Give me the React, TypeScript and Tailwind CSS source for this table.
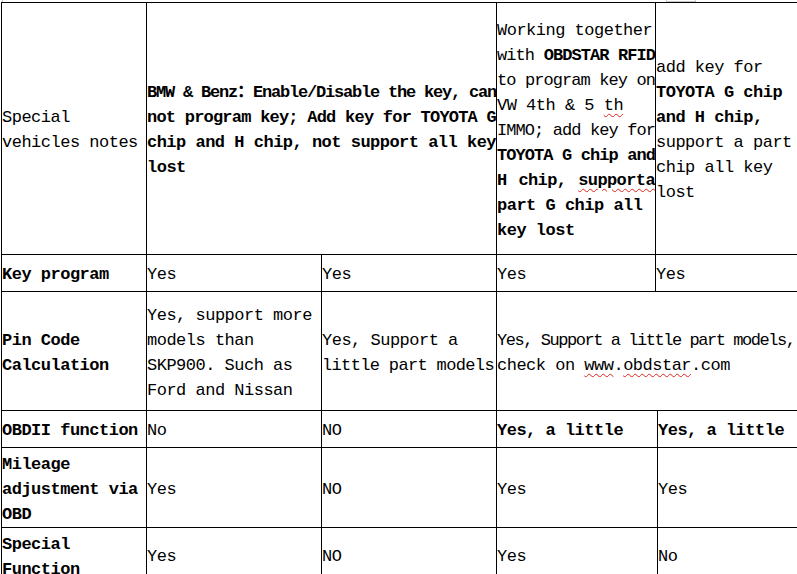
import React from "react";

const font = "font-['Liberation_Mono','Noto_Sans_CJK_SC',monospace]";

function Cell({ w, children }: { w: string; children?: React.ReactNode }) {
  return (
    <div className={`${w} shrink-0 h-full pt-[3px] border-r border-b border-black flex flex-col justify-center`}>
      {children}
    </div>
  );
}

function L({ children, b, j, t }: { children: React.ReactNode; b?: boolean; j?: boolean; t?: string }) {
  return (
    <div
      className={`whitespace-nowrap leading-[25px] ${b ? "font-bold" : ""} ${j ? "[text-align-last:justify]" : ""} ${t ?? "tracking-[-0.5px]"}`}
    >
      {children}
    </div>
  );
}

function Wavy({ children }: { children: React.ReactNode }) {
  return (
    <span className="underline decoration-wavy decoration-[#e0241b] decoration-1 underline-offset-[3px]">
      {children}
    </span>
  );
}

export default function App() {
  return (
    <div className={`w-[797px] h-[574px] overflow-hidden bg-white text-[17px] text-black ${font}`}>
      {/* bits of the page above the table */}
      <div className="h-[2px] flex">
        <div className="w-[3px] h-[2px] border-r border-[#c8c8c8]" />
        <div className="ml-[663px] w-[30px] h-[2px] border border-t-0 border-[#c8c8c8]" />
      </div>

      <div className="ml-[1px] w-max border-t border-l border-black">
        {/* Special vehicles notes */}
        <div className="flex h-[252px]">
          <Cell w="w-[145px]">
            <L>Special</L>
            <L>vehicles notes</L>
          </Cell>
          <Cell w="w-[350px]">
            <L b j t="tracking-[-1.2px]">BMW &amp; Benz：Enable/Disable the key, can</L>
            <L b j t="tracking-[-0.8px]">not program key; Add key for TOYOTA G</L>
            <L b j t="tracking-[-0.55px]">chip and H chip, not support all key</L>
            <L b>lost</L>
          </Cell>
          <Cell w="w-[159px]">
            <L>Working together</L>
            <L j t="tracking-[-0.95px]">
              with <b>OBDSTAR RFID</b>
            </L>
            <L j t="tracking-[-0.95px]">to program key on</L>
            <L>
              VW 4th &amp; 5 <Wavy>th</Wavy>
            </L>
            <L j t="tracking-[-0.95px]">IMMO; add key for</L>
            <L b j t="tracking-[-0.95px]">TOYOTA G chip and</L>
            <L b j t="tracking-[-0.6px]">
              H chip, <Wavy>supporta</Wavy>
            </L>
            <L b>part G chip all</L>
            <L b>key lost</L>
          </Cell>
          <Cell w="w-[170px]">
            <L>add key for</L>
            <L b>TOYOTA G chip</L>
            <L b>and H chip,</L>
            <L>support a part G</L>
            <L>chip all key</L>
            <L>lost</L>
          </Cell>
        </div>

        {/* Key program */}
        <div className="flex h-[37px]">
          <Cell w="w-[145px]">
            <L b>Key program</L>
          </Cell>
          <Cell w="w-[175px]">
            <L>Yes</L>
          </Cell>
          <Cell w="w-[175px]">
            <L>Yes</L>
          </Cell>
          <Cell w="w-[159px]">
            <L>Yes</L>
          </Cell>
          <Cell w="w-[170px]">
            <L>Yes</L>
          </Cell>
        </div>

        {/* Pin Code Calculation */}
        <div className="flex h-[119px]">
          <Cell w="w-[145px]">
            <L b>Pin Code</L>
            <L b>Calculation</L>
          </Cell>
          <Cell w="w-[175px]">
            <L>Yes, support more</L>
            <L>models than</L>
            <L>SKP900. Such as</L>
            <L>Ford and Nissan</L>
          </Cell>
          <Cell w="w-[175px]">
            <L>Yes, Support a</L>
            <L t="tracking-[-0.65px]">little part models</L>
          </Cell>
          <Cell w="w-[329px]">
            <L t="tracking-[-1.45px]">Yes, Support a little part models,</L>
            <L>
              check on <Wavy>www</Wavy>.<Wavy>obdstar</Wavy>.com
            </L>
          </Cell>
        </div>

        {/* OBDII function */}
        <div className="flex h-[37px]">
          <Cell w="w-[145px]">
            <L b>OBDII function</L>
          </Cell>
          <Cell w="w-[175px]">
            <L>No</L>
          </Cell>
          <Cell w="w-[175px]">
            <L>NO</L>
          </Cell>
          <Cell w="w-[161px]">
            <L b>Yes, a little</L>
          </Cell>
          <Cell w="w-[168px]">
            <L b>Yes, a little</L>
          </Cell>
        </div>

        {/* Mileage adjustment via OBD */}
        <div className="flex h-[80px]">
          <Cell w="w-[145px]">
            <L b>Mileage</L>
            <L b>adjustment via</L>
            <L b>OBD</L>
          </Cell>
          <Cell w="w-[175px]">
            <L>Yes</L>
          </Cell>
          <Cell w="w-[175px]">
            <L>NO</L>
          </Cell>
          <Cell w="w-[161px]">
            <L>Yes</L>
          </Cell>
          <Cell w="w-[168px]">
            <L>Yes</L>
          </Cell>
        </div>

        {/* Special Function */}
        <div className="flex h-[55px]">
          <Cell w="w-[145px]">
            <L b>Special</L>
            <L b>Function</L>
          </Cell>
          <Cell w="w-[175px]">
            <L>Yes</L>
          </Cell>
          <Cell w="w-[175px]">
            <L>NO</L>
          </Cell>
          <Cell w="w-[161px]">
            <L>Yes</L>
          </Cell>
          <Cell w="w-[168px]">
            <L>No</L>
          </Cell>
        </div>
      </div>
    </div>
  );
}
